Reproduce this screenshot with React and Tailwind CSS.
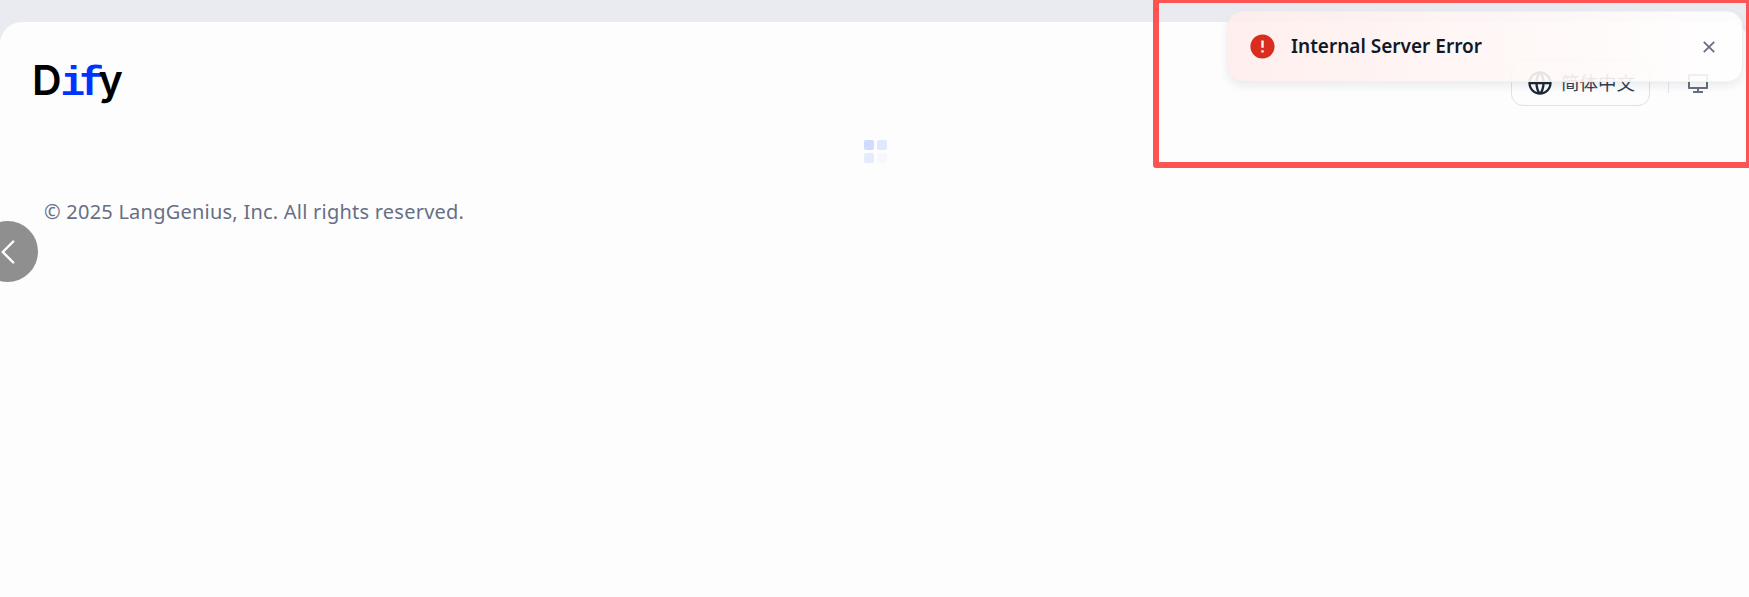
import { RiGlobalLine, RiComputerLine, RiCloseLine, RiErrorWarningFill } from "react-icons/ri";
import { ChevronLeft } from "lucide-react";

const sans = "font-['Noto_Sans','Noto_Sans_CJK_SC',sans-serif]";

function Logo() {
  return (
    <div className="flex items-baseline h-[46px] -mt-[6px] -ml-[1px] font-['Inter',sans-serif] text-[41px] leading-[46px] font-semibold text-black tracking-[-1px]">
      <span>D</span>
      <span className="font-['Liberation_Mono',monospace] font-bold text-[#0033ff] tracking-[-6px] mr-[4px]">if</span>
      <span className="-ml-[3px]">y</span>
    </div>
  );
}

function Spinner() {
  return (
    <div className="grid grid-cols-[10px_10px] gap-[3px]">
      <div className="h-[10px] rounded-[2px] bg-[#cfdcfd]" />
      <div className="h-[10px] rounded-[2px] bg-[#dfe8fe]" />
      <div className="h-[10px] rounded-[2px] bg-[#e4ebfd]" />
      <div className="h-[10px] rounded-[2px] bg-[#f6f8fe]" />
    </div>
  );
}

function Toast() {
  return (
    <div className="absolute left-[1227px] top-[11px] w-[516px] h-[71px] flex items-center pl-[20px] pr-[22px] rounded-[16px] border border-[#eaebf0]/60 bg-gradient-to-r from-[#ffeeec]/90 to-[#ffffff]/90 shadow-[0_4px_8px_rgba(16,24,40,0.08)]">
      <RiErrorWarningFill className="w-[29px] h-[29px] text-[#d92d20] shrink-0" />
      <span className={`${sans} ml-[14px] flex-1 text-[19px] font-semibold text-[#101828]`}>Internal Server Error</span>
      <RiCloseLine className="w-[22px] h-[22px] text-[#676f83]" />
    </div>
  );
}

export default function App() {
  return (
    <div className="relative h-screen overflow-hidden flex flex-col bg-[#eaebf0] pt-[22px]">
      <div className="flex-1 flex flex-col rounded-t-[22px] bg-[#fdfdfe]">
        {/* Header */}
        <header className="flex items-center justify-between pt-[38px] pl-[33px] pr-[39px]">
          <Logo />
          <div className="flex items-center">
            <button className={`${sans} flex items-center justify-center gap-[7px] w-[139px] h-[46px] rounded-[12px] border border-[#dfe1e6] text-[18.5px] text-[#354052]`}>
              <RiGlobalLine className="w-[28px] h-[28px] text-[#1d2939]" />
              简体中文
            </button>
            <div className="w-px h-[20px] bg-[#e4e6eb] ml-[18px] mr-[17px]" />
            <RiComputerLine className="w-[24px] h-[24px] text-[#676f83]" />
          </div>
        </header>

        {/* Loading */}
        <div className="flex justify-center pt-[34px] pl-[2px]">
          <Spinner />
        </div>

        {/* Footer */}
        <p className={`${sans} mt-[35px] pl-[44px] text-[20px] tracking-[0.23px] leading-[28px] text-[#676f83]`}>
          © 2025 LangGenius, Inc. All rights reserved.
        </p>
      </div>

      {/* Back button */}
      <button className="absolute -left-[23px] top-[221px] w-[61px] h-[61px] flex items-center justify-center rounded-full bg-[#8f8f8f] text-white">
        <ChevronLeft className="w-[42px] h-[42px]" strokeWidth={1.4} />
      </button>

      <Toast />

      {/* Annotation frame */}
      <div className="absolute left-[1153px] -top-[3px] -right-[3px] h-[171px] rounded-[3px] border-[6px] border-[#fd5353] pointer-events-none" />
    </div>
  );
}
